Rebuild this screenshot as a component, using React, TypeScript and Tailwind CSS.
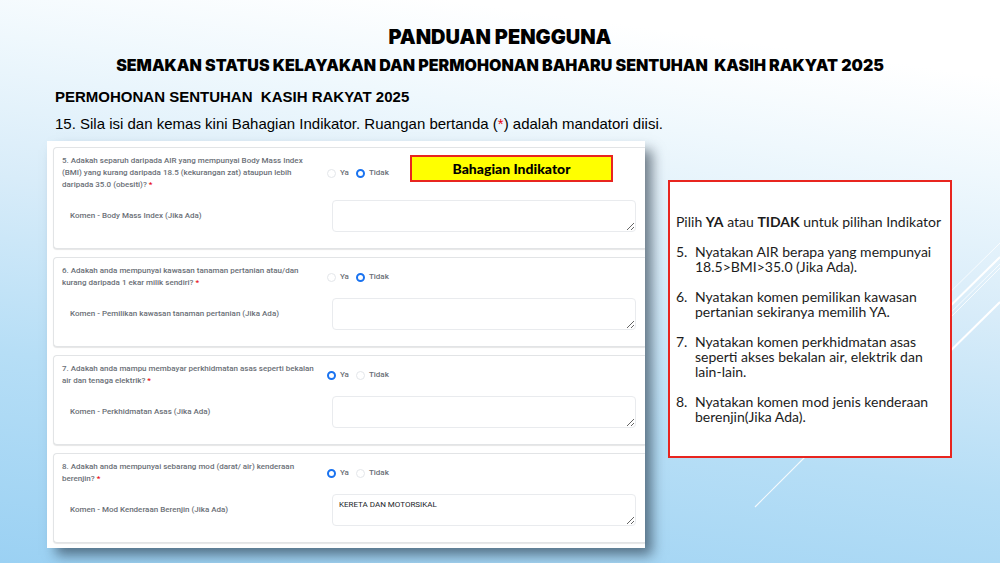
import { useId } from "react";

type Question = {
  no: number;
  text: string;
  comment: string;
  answer: "Ya" | "Tidak";
  value?: string;
  tag?: string;
};

const questions: Question[] = [
  {
    no: 5,
    text: "Adakah separuh daripada AIR yang mempunyai Body Mass Index (BMI) yang kurang daripada 18.5 (kekurangan zat) ataupun lebih daripada 35.0 (obesiti)?",
    comment: "Komen - Body Mass Index (Jika Ada)",
    answer: "Tidak",
    tag: "Bahagian Indikator",
  },
  {
    no: 6,
    text: "Adakah anda mempunyai kawasan tanaman pertanian atau/dan kurang daripada 1 ekar milik sendiri?",
    comment: "Komen - Pemilikan kawasan tanaman pertanian (Jika Ada)",
    answer: "Tidak",
  },
  {
    no: 7,
    text: "Adakah anda mampu membayar perkhidmatan asas seperti bekalan air dan tenaga elektrik?",
    comment: "Komen - Perkhidmatan Asas (Jika Ada)",
    answer: "Ya",
  },
  {
    no: 8,
    text: "Adakah anda mempunyai sebarang mod (darat/ air) kenderaan berenjin?",
    comment: "Komen - Mod Kenderaan Berenjin (Jika Ada)",
    answer: "Ya",
    value: "KERETA DAN MOTORSIKAL",
  },
];

const notes = [
  { no: 5, text: "Nyatakan AIR berapa yang mempunyai 18.5>BMI>35.0 (Jika Ada)." },
  { no: 6, text: "Nyatakan komen pemilikan kawasan pertanian sekiranya memilih YA." },
  { no: 7, text: "Nyatakan komen perkhidmatan asas seperti akses bekalan air, elektrik dan lain-lain." },
  { no: 8, text: "Nyatakan komen mod jenis kenderaan berenjin(Jika Ada)." },
];

function Choice({ name, label, checked }: { name: string; label: string; checked: boolean }) {
  return (
    <label className="flex items-center gap-1">
      <input
        type="radio"
        name={name}
        defaultChecked={checked}
        className="size-[9px] appearance-none rounded-full border border-[#e3e6ea] bg-white checked:border-2 checked:border-[#1a73f0]"
      />
      {label}
    </label>
  );
}

function QuestionCard({ q }: { q: Question }) {
  const id = useId();
  return (
    <section className="relative rounded-l border border-r-0 border-[#e2e4e6] bg-white pt-[7px] pr-[9px] pb-[15px] pl-2 shadow-[0_1px_1px_rgba(0,0,0,0.1)]">
      <fieldset className="grid grid-cols-[265fr_309fr] items-center">
        <p id={`${id}-q`} className="pr-3">
          {`${q.no}. ${q.text} `}
          <span className="text-red-600">*</span>
        </p>
        <div role="radiogroup" aria-labelledby={`${id}-q`} className="flex gap-[7px]">
          <Choice name={`${id}-r`} label="Ya" checked={q.answer === "Ya"} />
          <Choice name={`${id}-r`} label="Tidak" checked={q.answer === "Tidak"} />
        </div>
      </fieldset>
      <div className="mt-[9px] mb-px grid grid-cols-[270fr_304fr] items-center">
        <label htmlFor={`${id}-c`} className="pl-2">
          {q.comment}
        </label>
        <textarea
          id={`${id}-c`}
          defaultValue={q.value}
          className="block h-8 w-full resize-y rounded border border-[#e9ebee] bg-white px-1.5 py-1 font-normal text-[#212529]"
        />
      </div>
      {q.tag && (
        <div className="absolute top-[7px] right-8 w-[203px] border-2 border-[#e8251f] bg-[#ffff00] text-center font-[Lato,sans-serif] text-[14px] leading-[23px] font-black text-black">
          {q.tag}
        </div>
      )}
    </section>
  );
}

function Streaks() {
  return (
    <svg
      aria-hidden="true"
      className="pointer-events-none absolute top-60 right-0"
      width="250"
      height="270"
      viewBox="750 240 250 270"
      stroke="#fff"
    >
      <path d="M930 312 1000 243" strokeWidth="0.8" />
      <path d="M930 326 1000 257" strokeWidth="2" />
      <path d="M930 333 1000 264" strokeWidth="0.8" />
      <path d="M930 338 1000 268" strokeWidth="0.8" />
      <path d="M930 371 1000 302" strokeWidth="2" />
      <path d="M755 507 830 432" strokeWidth="1.2" opacity="0.85" />
    </svg>
  );
}

export default function App() {
  return (
    <main className="relative min-h-screen overflow-hidden bg-[linear-gradient(188deg,#ffffff_0%,#ffffff_11%,#eff8fd_25%,#d8ecf9_45%,#b6def6_70%,#9bd1f3_100%)] pt-6 pb-[15px] font-['Liberation_Sans',Arial,sans-serif] text-black">
      <Streaks />
      <header className="text-center font-[Inter,sans-serif] font-black">
        <h1 className="text-[20px] leading-[26px]">PANDUAN PENGGUNA</h1>
        <p className="mt-[5px] text-[16px] leading-5 whitespace-pre-wrap">
          {"SEMAKAN STATUS KELAYAKAN DAN PERMOHONAN BAHARU SENTUHAN  KASIH RAKYAT 2025"}
        </p>
      </header>
      <div className="mt-3 px-[55px]">
        <h2 className="text-[15px] leading-5 font-bold whitespace-pre-wrap">
          {"PERMOHONAN SENTUHAN  KASIH RAKYAT 2025"}
        </h2>
        <p className="mt-[7px] text-[15px] leading-5">
          15. Sila isi dan kemas kini Bahagian Indikator. Ruangan bertanda (
          <span className="text-red-600">*</span>) adalah mandatori diisi.
        </p>
      </div>

      <div className="relative mt-[7px] grid grid-cols-[598fr_284fr] items-start gap-[23px] pr-12 pl-[47px]">
        <form className="flex flex-col gap-2 bg-white pt-1.5 pb-[5px] pl-1.5 font-[Roboto,sans-serif] text-[8px] leading-3 font-medium text-[#6b7077] shadow-[8px_8px_12px_-1px_rgba(30,45,60,0.6)]">
          {questions.map((q) => (
            <QuestionCard key={q.no} q={q} />
          ))}
        </form>

        <aside className="mt-[39px] border-2 border-[#e8251f] bg-white px-1.5 py-8 font-[Lato,sans-serif] text-[14px] leading-[15px] text-[#1c1c1c]">
          <p>
            Pilih <b>YA</b> atau <b>TIDAK</b> untuk pilihan Indikator
          </p>
          <ol>
            {notes.map((n) => (
              <li key={n.no} className="mt-[15px] flex">
                <span className="w-[19px] shrink-0">{`${n.no}.`}</span>
                <span>{n.text}</span>
              </li>
            ))}
          </ol>
        </aside>
      </div>
    </main>
  );
}
